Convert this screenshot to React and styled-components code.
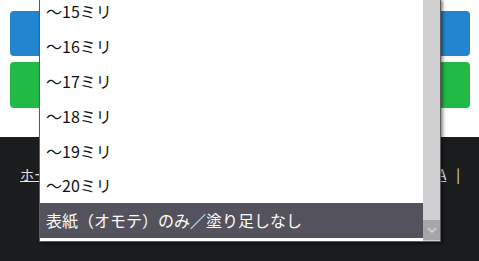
import React, { useLayoutEffect, useRef } from 'react';
import styled, { createGlobalStyle } from 'styled-components';

const GlobalStyle = createGlobalStyle`
  html, body {
    margin: 0;
    padding: 0;
    background: #1b1c1d;
  }
  body {
    font-family: "Noto Sans CJK JP", "Noto Sans", sans-serif;
  }
`;

const Page = styled.div`
  position: relative;
  min-height: 100vh;
  display: flex;
  flex-direction: column;
  overflow: hidden;
`;

const Main = styled.div`
  background: #fff;
  display: flex;
  flex-direction: column;
  gap: 6px;
  padding: 11px 9px 29px 10px;
`;

const ActionButton = styled.button`
  height: ${(p) => p.$h}px;
  border: none;
  border-radius: 4px;
  background: ${(p) => p.$color};
  color: #fff;
  font-family: inherit;
  font-size: 15px;
  font-weight: bold;
`;

const Footer = styled.footer`
  flex: 1;
  background: #1b1c1d;
  display: flex;
  justify-content: space-between;
  align-items: flex-start;
  padding: 27px 19px 0 20px;
  color: #e4e4e4;
  font-size: 14px;
`;

const FooterGroup = styled.div`
  display: flex;
  gap: 10px;
  align-items: baseline;
`;

const FooterLink = styled.a`
  color: #e4e4e4;
  text-decoration: underline;
`;

const Dropdown = styled.div`
  position: absolute;
  left: 39px;
  top: -2px;
  width: 400px;
  height: 242px;
  border: 1px solid #5c5c5e;
  background: #fff;
  display: flex;
  box-shadow: 2px 2px 3px rgba(0, 0, 0, 0.45);
`;

const List = styled.ul`
  flex: 1;
  margin: 0;
  padding: 0 0 3px;
  list-style: none;
  overflow: hidden;
`;

const Option = styled.li`
  height: 34.8px;
  display: flex;
  align-items: center;
  padding-left: 6px;
  font-size: 16px;
  color: ${(p) => (p.$selected ? '#fff' : '#111')};
  background: ${(p) => (p.$selected ? '#53525d' : 'transparent')};
`;

const Scrollbar = styled.div`
  width: 17px;
  background: #cfcfd1;
  display: flex;
  flex-direction: column;
  justify-content: flex-end;
`;

const ScrollArrow = styled.div`
  height: 20px;
  margin-bottom: 1px;
  background: #a6a6a8;
  display: flex;
  align-items: center;
  justify-content: center;
`;

const options = [
  '〜10ミリ',
  '〜11ミリ',
  '〜12ミリ',
  '〜13ミリ',
  '〜14ミリ',
  '〜15ミリ',
  '〜16ミリ',
  '〜17ミリ',
  '〜18ミリ',
  '〜19ミリ',
  '〜20ミリ',
  '表紙（オモテ）のみ／塗り足しなし',
];

const App = () => {
  const listRef = useRef(null);

  // native list is scrolled to the bottom, selected item last
  useLayoutEffect(() => {
    if (listRef.current) listRef.current.scrollTop = listRef.current.scrollHeight;
  }, []);

  return (
    <Page>
      <GlobalStyle />
      <Main>
        <ActionButton $h={45} $color="#2185d0">カートに入れる</ActionButton>
        <ActionButton $h={46} $color="#21ba45">見積もりを保存</ActionButton>
      </Main>
      <Footer>
        <FooterGroup>
          <FooterLink href="#">ホーム</FooterLink>
        </FooterGroup>
        <FooterGroup>
          <FooterLink href="#">Q&amp;A</FooterLink>
          <span>|</span>
        </FooterGroup>
      </Footer>
      <Dropdown>
        <List ref={listRef}>
          {options.map((o, i) => (
            <Option key={o} $selected={i === options.length - 1}>{o}</Option>
          ))}
        </List>
        <Scrollbar>
          <ScrollArrow>
            <svg width="10" height="6" viewBox="0 0 10 6">
              <path d="M1 1 L5 5 L9 1" fill="none" stroke="#d4d4d6" strokeWidth="1.6" />
            </svg>
          </ScrollArrow>
        </Scrollbar>
      </Dropdown>
    </Page>
  );
};

export default App;
